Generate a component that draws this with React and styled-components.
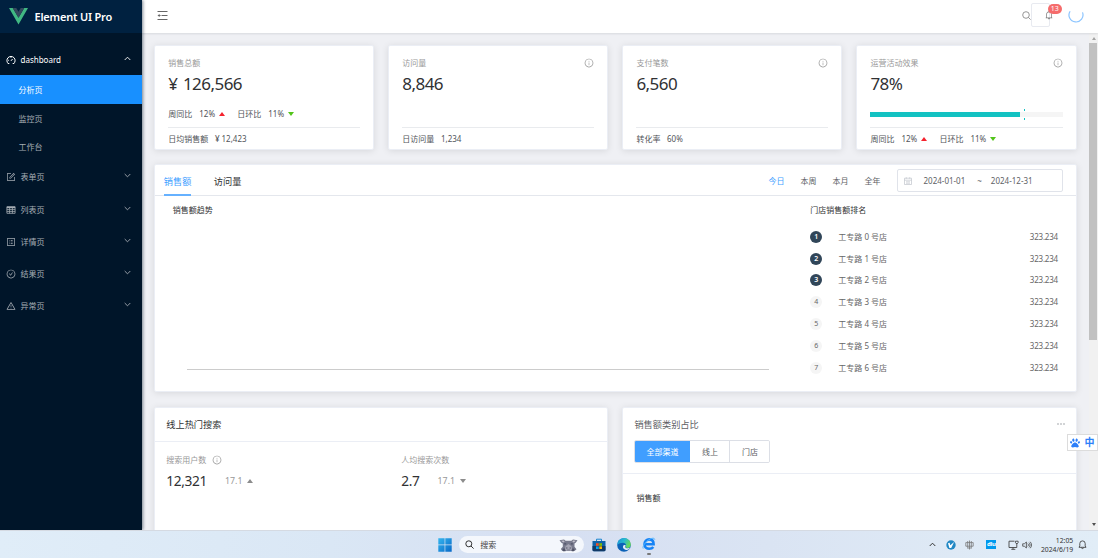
import React from 'react';
import styled, { createGlobalStyle } from 'styled-components';
import {
  AiOutlineBell,
  AiOutlineCheckCircle,
  AiOutlineForm,
  AiOutlineInfoCircle,
  AiOutlineProfile,
  AiOutlineWarning,
} from 'react-icons/ai';
import { FaPaw } from 'react-icons/fa';

const GaugeIcon = () => (
  <svg width="10" height="10" viewBox="0 0 10 10" fill="none" stroke="currentColor" strokeWidth="1">
    <path d="M2.4 8.7A4.1 4.1 0 1 1 7.6 8.7M1.9 8.5h1.4M6.7 8.5h1.4M4.9 5.9 6.6 4M5 2v.8M2.2 5.3H3" />
  </svg>
);

const TableIcon = () => (
  <svg width="10" height="10" viewBox="0 0 10 10" fill="none" stroke="currentColor" strokeWidth=".8">
    <path d="M.9 1.7h8.2v6.6H.9zM.9 4.4h8.2M.9 6.4h8.2M3.6 2v6.3M6.4 2v6.3" />
    <path d="M.9 2.4h8.2" strokeWidth="1.4" />
  </svg>
);

const FoldIcon = () => (
  <svg width="11" height="11" viewBox="0 0 11 11" fill="none" stroke="#666" strokeWidth="1">
    <path d="M.5 1.5h10M4.5 5.5h6M.5 9.5h10M1 5.5h2.6" />
    <path d="M2.6 3.9v3.2L.5 5.5z" fill="#666" stroke="none" />
  </svg>
);

const menus = [
  { title: '表单页', icon: AiOutlineForm },
  { title: '列表页', icon: TableIcon },
  { title: '详情页', icon: AiOutlineProfile },
  { title: '结果页', icon: AiOutlineCheckCircle },
  { title: '异常页', icon: AiOutlineWarning },
];

const Chevron = ({ up }) => (
  <svg width="7" height="5" viewBox="0 0 7 5" fill="none" stroke="currentColor" strokeWidth="0.9">
    <path d={up ? 'M.7 4 3.5 1.2 6.3 4' : 'M.7 1 3.5 3.8 6.3 1'} />
  </svg>
);

const VueLogo = () => (
  <svg width="19" height="16.4" viewBox="0 0 256 221">
    <path fill="#41b883" d="m0 0 128 220.8L256 0h-51.2L128 132.48 50.56 0H0z" />
    <path fill="#35495e" d="M50.56 0 128 133.12 204.8 0h-47.36L128 51.2 97.92 0H50.56z" />
  </svg>
);

const Trend = () => (
  <TrendRow>
    <span>周同比</span>
    <Percent>12%</Percent>
    <Caret $color="#f5222d" $up />
    <TrendNext>日环比</TrendNext>
    <Percent>11%</Percent>
    <Caret $color="#52c41a" />
  </TrendRow>
);

const StatCard = ({ title, value, info, children, footer }) => (
  <Stat>
    <StatHead>
      <span>{title}</span>
      {info && <AiOutlineInfoCircle size={10} />}
    </StatHead>
    <StatValue>{value}</StatValue>
    <StatBody>{children}</StatBody>
    <StatFooter>{footer}</StatFooter>
  </Stat>
);

const Sidebar = () => (
  <Aside>
    <Brand>
      <VueLogo />
      <BrandName>Element UI Pro</BrandName>
    </Brand>
    <Menu>
      <MenuItem $open>
        <GaugeIcon />
        <MenuText>dashboard</MenuText>
        <Chevron up />
      </MenuItem>
      <SubItem $active>分析页</SubItem>
      <SubItem>监控页</SubItem>
      <SubItem>工作台</SubItem>
      {menus.map(({ title, icon: Icon }) => (
        <MenuItem key={title}>
          <Icon size={10} />
          <MenuText>{title}</MenuText>
          <Chevron />
        </MenuItem>
      ))}
    </Menu>
  </Aside>
);

const Header = () => (
  <TopBar>
    <FoldIcon />
    <TopTools>
      <svg width="9" height="9" viewBox="0 0 9 9" fill="none" stroke="#8a8a8a" strokeWidth=".9">
        <circle cx="4" cy="4" r="3.3" />
        <path d="m6.3 6.3 2.3 2.3" />
      </svg>
      <BellBox>
        <AiOutlineBell size={10} />
        <Badge>13</Badge>
      </BellBox>
      <svg width="16" height="16" viewBox="0 0 16 16" fill="none">
        <path d="M2.1 4.2A7 7 0 1 0 14.5 5.4" stroke="#8cc5ff" strokeWidth="1.2" />
      </svg>
    </TopTools>
  </TopBar>
);

const SalesPanel = () => (
  <Panel>
    <TabBar>
      <Tab $active>销售额</Tab>
      <Tab>访问量</Tab>
      <Ranges>
        <Range $active>今日</Range>
        <Range>本周</Range>
        <Range>本月</Range>
        <Range>全年</Range>
        <DateRange>
          <svg width="8" height="8" viewBox="0 0 8 8" fill="none" stroke="#c0c4cc" strokeWidth="0.7">
            <path d="M.5 1.2h7v6.3h-7zM.5 3.2h7M2.3.3v1.4M5.7.3v1.4M2 4.8h4M2 6.2h4" />
          </svg>
          <DateText>2024-01-01</DateText>
          <Tilde>~</Tilde>
          <DateText>2024-12-31</DateText>
        </DateRange>
      </Ranges>
    </TabBar>
    <SalesBody>
      <Trends>
        <SmallTitle>销售额趋势</SmallTitle>
        <Axis />
      </Trends>
      <Ranking>
        <SmallTitle>门店销售额排名</SmallTitle>
        <RankList>
          {[0, 1, 2, 3, 4, 5, 6].map((i) => (
            <RankRow key={i}>
              <RankNo $top={i < 3}>{i + 1}</RankNo>
              <RankName>工专路 {i} 号店</RankName>
              <RankValue>323.234</RankValue>
            </RankRow>
          ))}
        </RankList>
      </Ranking>
    </SalesBody>
  </Panel>
);

const SearchPanel = () => (
  <BottomPanel>
    <PanelTitle>线上热门搜索</PanelTitle>
    <SearchBody>
      <SearchStat>
        <SearchLabel>
          搜索用户数 <AiOutlineInfoCircle size={10} />
        </SearchLabel>
        <SearchNumbers>
          <SearchValue>12,321</SearchValue>
          <SearchDelta>17.1</SearchDelta>
          <Caret $color="#8c8c8c" $up />
        </SearchNumbers>
      </SearchStat>
      <SearchStat>
        <SearchLabel>人均搜索次数</SearchLabel>
        <SearchNumbers>
          <SearchValue>2.7</SearchValue>
          <SearchDelta>17.1</SearchDelta>
          <Caret $color="#8c8c8c" />
        </SearchNumbers>
      </SearchStat>
    </SearchBody>
  </BottomPanel>
);

const CategoryPanel = () => (
  <BottomPanel>
    <CategoryHead>
      <CategoryTitle>
        <span>销售额类别占比</span>
        <svg width="8" height="2" viewBox="0 0 8 2" fill="#909399">
          <circle cx="1" cy="1" r=".75" />
          <circle cx="4" cy="1" r=".75" />
          <circle cx="7" cy="1" r=".75" />
        </svg>
      </CategoryTitle>
      <RadioGroup>
        <Radio $active>全部渠道</Radio>
        <Radio>线上</Radio>
        <Radio>门店</Radio>
      </RadioGroup>
    </CategoryHead>
    <CategoryBody>销售额</CategoryBody>
  </BottomPanel>
);

const WindowsLogo = () => (
  <svg width="14" height="14" viewBox="0 0 14 14">
    <defs>
      <linearGradient id="win" x1="0" y1="0" x2="1" y2="1">
        <stop offset="0" stopColor="#35b5ee" />
        <stop offset="1" stopColor="#0869c8" />
      </linearGradient>
    </defs>
    <path fill="url(#win)" d="M.3.3h6.3v6.3H.3zM7.3.3h6.4v6.3H7.3zM.3 7.3h6.3v6.4H.3zM7.3 7.3h6.4v6.4H7.3z" />
  </svg>
);

const Rhino = () => (
  <svg width="19" height="14" viewBox="0 0 19 14">
    <path fill="#77798c" d="M.5 2.2 5 1.4l1.6 1.4h5.8L14 1.4l4.5.8-1.8 2.6-1.2.8v3.2l2 2.5-2 1.6H3.4L1.8 11l2-2.3V5.6L2.4 4.8z" />
    <path fill="#c1bfcb" d="m2.2 2.8 2.5-.4 1 1.2-1.5 1zM16.8 2.8l-2.5-.4-1 1.2 1.5 1z" />
    <path fill="#4f5266" d="M5.2 5.2h2v1.3h-2zM11.8 5.2h2v1.3h-2zM3.5 11l2-.8 1 3H4zM13.5 10.2l2 .8-.7 2.2h-2z" />
    <path fill="#a4a4b3" d="M6.5 8.2 9.5 6l3 2.2.5 3-1.6 1.7H7.6L6 11.2z" />
    <path fill="#45485a" d="M7.2 9.5h1.2v1H7.2zM10.6 9.5h1.2v1h-1.2zM8 11.7h3v.6H8z" />
  </svg>
);

const StoreLogo = () => (
  <svg width="14" height="14" viewBox="0 0 14 14">
    <path fill="none" stroke="#1a86cf" strokeWidth="1" d="M4.5 4V1.2h5V4" />
    <path fill="#0f63a8" d="M.5 3h13v8.8a1.5 1.5 0 0 1-1.5 1.5H2a1.5 1.5 0 0 1-1.5-1.5z" />
    <path fill="#123a68" d="M.5 8h13v3.8a1.5 1.5 0 0 1-1.5 1.5H2a1.5 1.5 0 0 1-1.5-1.5z" />
    <path fill="#f25022" d="M4 5.2h2.7v2.6H4z" />
    <path fill="#7fba00" d="M7.3 5.2H10v2.6H7.3z" />
    <path fill="#00a4ef" d="M4 8.4h2.7V11H4z" />
    <path fill="#ffb900" d="M7.3 8.4H10V11H7.3z" />
  </svg>
);

const EdgeLogo = () => (
  <svg width="14" height="14" viewBox="0 0 14 14">
    <defs>
      <linearGradient id="edge" x1="0" y1="0" x2="1" y2=".4">
        <stop offset="0" stopColor="#1793d8" />
        <stop offset=".55" stopColor="#29b9cf" />
        <stop offset="1" stopColor="#67d95a" />
      </linearGradient>
    </defs>
    <circle cx="7" cy="7" r="6.8" fill="#0c62b7" />
    <path fill="url(#edge)" d="M.2 7A6.8 6.8 0 0 1 13.8 6.5c0 2.3-1.5 3.4-3.2 3.4-1.3 0-2.3-.5-2.3-1.1 0-.4.7-.7.7-1.7 0-1.3-1.3-2.3-3-2.3C3.2 4.8 1 6 .2 7z" />
    <path fill="#e3ebf6" d="M8.6 7.2c0 .8-.6 1-.5 1.7.2.9 1.3 1.4 2.6 1.4 1 0 1.8-.3 2.5-.8-.5 1-1.2 1.8-2.2 2.3-3 .5-5.5-1.5-5-3.4.3-1 1.3-1.6 2.6-1.2z" />
  </svg>
);

const BrowserLogo = () => (
  <svg width="14" height="14" viewBox="0 0 14 14" fill="none">
    <path stroke="#1683f5" strokeWidth="2.6" d="M3 7.3h8.6C11.6 4.3 9.8 2.4 7.2 2.4S2.5 4.5 2.5 7.2s2 4.6 4.8 4.6c1.8 0 3.1-.6 4-1.8" />
    <path stroke="#55b5ff" strokeWidth="1" d="M1.2 11.6C-.2 9.4 5.2 2.3 10 1.3c1.8-.3 2.7.2 2.8 1.3" />
  </svg>
);

const Taskbar = () => (
  <TaskbarWrap>
    <TaskCenter>
      <WindowsLogo />
      <TaskSearch>
        <svg width="9" height="9" viewBox="0 0 9 9" fill="none" stroke="#333" strokeWidth="1">
          <circle cx="3.8" cy="3.8" r="3" />
          <path d="m6 6 2.6 2.6" />
        </svg>
        <TaskSearchText>搜索</TaskSearchText>
        <Rhino />
      </TaskSearch>
      <StoreLogo />
      <EdgeLogo />
      <RunningApp>
        <BrowserLogo />
      </RunningApp>
    </TaskCenter>
    <Tray>
      <svg width="7" height="5" viewBox="0 0 7 5" fill="none" stroke="#333" strokeWidth="1">
        <path d="M.7 4 3.5 1.2 6.3 4" />
      </svg>
      <svg width="10" height="10" viewBox="0 0 10 10">
        <circle cx="5" cy="5" r="4.7" fill="#2288c4" />
        <path fill="#fff" d="m2 3.2 1.6-.4.7 2.5L8.1 2 5.2 8H3.4z" />
      </svg>
      <svg width="9" height="10" viewBox="0 0 9 10" fill="none" stroke="#777" strokeWidth=".8">
        <path d="M.8 2.6h7.4v3.6H.8zM4.5.5v9M2.7 1v6.6M6.3 1v6.6M2 8h5" />
      </svg>
      <DluIcon>dlu</DluIcon>
      <NetSound>
        <svg width="11" height="10" viewBox="0 0 11 10" fill="none" stroke="#444" strokeWidth=".9">
          <path d="M6.5 1.2H1v6.3h7.8V5M3.3 9.3h4M5 7.5v1.8M8.8 5V3.5M7.5 1.2h2.6v1.5l-.6.8H8.1l-.6-.8z" />
        </svg>
        <svg width="10" height="8" viewBox="0 0 10 8" fill="none" stroke="#444" strokeWidth=".8">
          <path d="M.7 2.8h1.6L4.4 1v6L2.3 5.2H.7zM5.8 2.6c.8.8.8 2 0 2.8M7 1.6c1.4 1.4 1.4 3.4 0 4.8M8.2.8c1.8 1.8 1.8 4.6 0 6.4" />
        </svg>
      </NetSound>
      <Clock>
        <span>12:05</span>
        <span>2024/6/19</span>
      </Clock>
      <svg width="9" height="10" viewBox="0 0 9 10" fill="none" stroke="#444" strokeWidth=".9">
        <path d="M1 7.3h7L7.2 5.8V3.6a2.7 2.7 0 0 0-5.4 0v2.2zM3.3 7.5c.2 1.4 2.2 1.4 2.4 0" />
      </svg>
    </Tray>
  </TaskbarWrap>
);

const App = () => (
  <Screen>
    <GlobalStyle />
    <Layout>
      <Sidebar />
      <Main>
        <Header />
        <Viewport>
          <Content>
            <StatGrid>
              <StatCard
                title="销售总额"
                value="¥ 126,566"
                footer={<>日均销售额 <FooterValue>¥ 12,423</FooterValue></>}
              >
                <Trend />
              </StatCard>
              <StatCard title="访问量" value="8,846" info footer={<>日访问量 <FooterValue>1,234</FooterValue></>} />
              <StatCard title="支付笔数" value="6,560" info footer={<>转化率 <FooterValue>60%</FooterValue></>} />
              <StatCard title="运营活动效果" value="78%" info footer={<Trend />}>
                <Progress>
                  <ProgressBar />
                  <ProgressTarget />
                </Progress>
              </StatCard>
            </StatGrid>
            <SalesPanel />
            <BottomGrid>
              <SearchPanel />
              <CategoryPanel />
            </BottomGrid>
          </Content>
          <Scrollbar>
            <ScrollArrow $up />
            <ScrollThumb />
            <ScrollArrow />
          </Scrollbar>
        </Viewport>
      </Main>
    </Layout>
    <Taskbar />
    <ImeBar>
      <FaPaw size={10} />
      <span>中</span>
    </ImeBar>
  </Screen>
);

const GlobalStyle = createGlobalStyle`
  * {
    box-sizing: border-box;
  }

  body {
    margin: 0;
    overflow: hidden;
    font-family: 'Noto Sans', 'Noto Sans CJK SC', sans-serif;
    font-size: 8px;
    line-height: 12px;
    color: #515459;
  }

  svg {
    display: block;
    flex-shrink: 0;
  }
`;

const Screen = styled.div`
  position: relative;
  display: flex;
  flex-direction: column;
  width: 1098px;
  height: 558px;
  overflow: hidden;
`;

const Layout = styled.div`
  display: flex;
  height: 530px;
`;

const Aside = styled.aside`
  width: 142.4px;
  flex-shrink: 0;
  background: #001529;
  box-shadow: 1px 0 3px rgba(0, 21, 41, 0.5);
  z-index: 2;
`;

const Brand = styled.div`
  display: flex;
  align-items: center;
  height: 33px;
  padding-left: 9px;
  background: #002140;
`;

const BrandName = styled.span`
  margin-left: 6.5px;
  font-size: 11px;
  font-weight: 600;
  letter-spacing: -0.2px;
  line-height: 16px;
  color: #fff;
`;

const Menu = styled.nav`
  padding-top: 10px;
`;

const MenuItem = styled.div`
  display: flex;
  align-items: center;
  height: 32.15px;
  padding: 1px 11px 0 6px;
  color: ${({ $open }) => ($open ? '#fff' : '#a6adb4')};

  > svg:last-child {
    margin-top: -3px;
  }
`;

const MenuText = styled.span`
  flex: 1;
  margin-left: 4.5px;
`;

const SubItem = styled.div`
  height: 28.6px;
  padding-left: 18.5px;
  line-height: 30px;
  color: ${({ $active }) => ($active ? '#fff' : '#a6adb4')};
  background: ${({ $active }) => ($active ? '#1890ff' : 'transparent')};
`;

const Main = styled.main`
  display: flex;
  flex: 1;
  flex-direction: column;
  min-width: 0;
`;

const TopBar = styled.header`
  display: flex;
  align-items: center;
  justify-content: space-between;
  height: 33px;
  padding: 0 14px 3px 14.6px;
  background: #fff;
  box-shadow: 0 1px 2px rgba(0, 21, 41, 0.1);
  z-index: 1;
`;

const TopTools = styled.div`
  display: flex;
  align-items: center;
  color: #7a7a7a;
`;

const BellBox = styled.div`
  position: relative;
  display: flex;
  align-items: center;
  width: 19px;
  height: 23.5px;
  margin-right: 18px;
  padding-left: 12px;
  border: 1px solid #e8eaf0;
  border-radius: 2px;
`;

const Badge = styled.span`
  position: absolute;
  top: 0;
  left: 15.5px;
  width: 14.5px;
  height: 10px;
  border-radius: 5px;
  background: #f56c6c;
  color: #fff;
  font-size: 7px;
  line-height: 10px;
  text-align: center;
`;

const Viewport = styled.div`
  display: flex;
  flex: 1;
  min-height: 0;
`;

const Content = styled.div`
  display: flex;
  flex: 1;
  flex-direction: column;
  gap: 14.5px;
  padding: 11.7px 12.5px 0 11.9px;
  overflow: hidden;
  background: #eff0f4;
`;

const Card = styled.section`
  background: #fff;
  border: 1px solid #ebeef5;
  border-radius: 2px;
  box-shadow: 0 1px 7px rgba(0, 0, 0, 0.1);
`;

const StatGrid = styled.div`
  display: grid;
  grid-template-columns: repeat(4, 1fr);
  gap: 14px;
  flex-shrink: 0;
`;

const Stat = styled(Card)`
  height: 105.3px;
  padding: 11px 13px 0;
`;

const StatHead = styled.div`
  display: flex;
  align-items: center;
  justify-content: space-between;
  height: 12px;
  color: #999;
`;

const StatValue = styled.div`
  height: 22px;
  margin-top: 4px;
  font-size: 17px;
  letter-spacing: -0.55px;
  word-spacing: 1.6px;
  line-height: 22px;
  color: #303133;
`;

const StatBody = styled.div`
  display: flex;
  align-items: center;
  height: 32px;
  padding-top: 6px;
`;

const StatFooter = styled.div`
  padding-top: 5px;
  border-top: 1px solid #e9ebee;
`;

const FooterValue = styled.span`
  margin-left: 4.5px;
`;

const TrendRow = styled.div`
  display: flex;
  align-items: center;
`;

const TrendNext = styled.span`
  margin-left: 12px;
`;

const Percent = styled.span`
  width: 16px;
  margin: 0 4px 0 7px;
`;

const Caret = styled.i`
  width: 0;
  height: 0;
  border: 3px solid transparent;
  border-${({ $up }) => ($up ? 'top' : 'bottom')}: 0;
  border-${({ $up }) => ($up ? 'bottom' : 'top')}: 4px solid ${({ $color }) => $color};
`;

const Progress = styled.div`
  position: relative;
  width: 100%;
  height: 5px;
  margin-top: 2px;
  background: #f5f5f5;
`;

const ProgressBar = styled.div`
  width: 78%;
  height: 5px;
  background: #13c2c2;
`;

const ProgressTarget = styled.div`
  position: absolute;
  top: -3px;
  left: 80%;
  width: 1px;
  height: 11px;
  border: solid #13c2c2;
  border-width: 2px 0;
`;

const Panel = styled(Card)`
  flex-shrink: 0;
  height: 228px;
`;

const TabBar = styled.div`
  display: flex;
  height: 30.5px;
  padding: 0 13px 0 8.5px;
  border-bottom: 1px solid #e4e7ed;
`;

const Tab = styled.div`
  height: 30.5px;
  margin-right: 22.5px;
  border-bottom: 2px solid ${({ $active }) => ($active ? '#66b1ff' : 'transparent')};
  font-size: 9.2px;
  line-height: 33px;
  color: ${({ $active }) => ($active ? '#409eff' : '#303133')};
`;

const Ranges = styled.div`
  display: flex;
  align-items: center;
  margin-left: auto;
  padding-top: 1px;
`;

const Range = styled.span`
  margin-right: 16px;
  color: ${({ $active }) => ($active ? '#409eff' : '#606266')};
`;

const DateRange = styled.div`
  display: flex;
  align-items: center;
  width: 166px;
  height: 23.5px;
  padding-left: 6px;
  border: 1px solid #e0e3ea;
  border-radius: 2px;
  color: #606266;
`;

const DateText = styled.span`
  margin-left: 12px;
`;

const Tilde = styled.span`
  margin-left: 12px;
  margin-right: -3px;
`;

const SalesBody = styled.div`
  display: flex;
  padding-top: 7.7px;
`;

const Trends = styled.div`
  width: 655px;
  padding-left: 17.5px;
`;

const SmallTitle = styled.div`
  height: 12px;
  color: #303133;
`;

const Axis = styled.div`
  width: 582px;
  height: 1px;
  margin: 153px 0 0 14.5px;
  background: #ccc;
`;

const Ranking = styled.div`
  flex: 1;
  padding-right: 17.5px;
`;

const RankList = styled.div`
  padding-top: 10.2px;
`;

const RankRow = styled.div`
  display: flex;
  align-items: center;
  height: 21.8px;
  color: #666;
`;

const RankNo = styled.span`
  width: 12px;
  height: 12px;
  border-radius: 50%;
  background: ${({ $top }) => ($top ? '#314659' : '#f5f5f5')};
  color: ${({ $top }) => ($top ? '#fff' : '#666')};
  font-size: 7px;
  font-weight: ${({ $top }) => ($top ? 600 : 400)};
  line-height: 12px;
  text-align: center;
`;

const RankName = styled.span`
  flex: 1;
  margin-left: 16px;
`;

const RankValue = styled.span`
  letter-spacing: -0.2px;
`;

const BottomGrid = styled.div`
  display: grid;
  grid-template-columns: 1fr 1fr;
  gap: 14px;
  flex-shrink: 0;
`;

const BottomPanel = styled(Card)`
  height: 200px;
`;

const PanelTitle = styled.div`
  height: 34.5px;
  padding-left: 11px;
  border-bottom: 1px solid #ebeef5;
  font-size: 9.2px;
  line-height: 34px;
  color: #303133;
`;

const SearchBody = styled.div`
  display: grid;
  grid-template-columns: 235px 1fr;
  padding: 12px 11px 0;
`;

const SearchStat = styled.div``;

const SearchLabel = styled.div`
  display: flex;
  align-items: center;
  gap: 5.5px;
  height: 12px;
  color: #999;
`;

const SearchNumbers = styled.div`
  display: flex;
  align-items: center;
  height: 20px;
  margin-top: 5px;
`;

const SearchValue = styled.span`
  font-size: 13.7px;
  letter-spacing: -0.35px;
  line-height: 20px;
  color: #303133;
`;

const SearchDelta = styled.span`
  margin: 0 5px 0 18px;
  font-size: 8.8px;
  color: #999;
`;

const CategoryHead = styled.div`
  height: 66px;
  padding: 10px 11px 0;
  border-bottom: 1px solid #ebeef5;
`;

const CategoryTitle = styled.div`
  display: flex;
  justify-content: space-between;
  height: 14px;
  font-size: 9.2px;
  line-height: 14px;
  color: #606266;

  svg {
    margin-top: 5px;
  }
`;

const RadioGroup = styled.div`
  display: flex;
  width: 136px;
  height: 23.5px;
  margin-top: 7.8px;
  border: 1px solid #dcdfe6;
  border-radius: 2px;
  overflow: hidden;
`;

const Radio = styled.div`
  flex: ${({ $active }) => ($active ? '0 0 56px' : '1')};
  margin: ${({ $active }) => ($active ? '-1px 0 -1px -1px' : '0')};
  border-right: ${({ $active }) => ($active ? '0' : '1px solid #dcdfe6')};
  background: ${({ $active }) => ($active ? '#409eff' : '#fff')};
  color: ${({ $active }) => ($active ? '#fff' : '#606266')};
  line-height: ${({ $active }) => ($active ? '23.5px' : '21.5px')};
  text-align: center;

  &:last-child {
    border-right: 0;
  }
`;

const CategoryBody = styled.div`
  padding: 18px 13px;
  color: #303133;
`;

const Scrollbar = styled.div`
  display: flex;
  flex-direction: column;
  align-items: center;
  width: 9px;
  background: #f1f1f1;
`;

const ScrollArrow = styled.i`
  margin: ${({ $up }) => ($up ? '4px 0 3px' : 'auto 0 4px')};
  border: 2.5px solid transparent;
  border-${({ $up }) => ($up ? 'top' : 'bottom')}: 0;
  border-${({ $up }) => ($up ? 'bottom' : 'top')}: 3px solid ${({ $up }) => ($up ? '#a3a3a3' : '#505050')};
`;

const ScrollThumb = styled.div`
  align-self: flex-start;
  width: 8px;
  height: 297px;
  background: #c1c1c1;
`;

const ImeBar = styled.div`
  position: absolute;
  top: 434px;
  right: 0;
  display: flex;
  align-items: center;
  justify-content: space-between;
  width: 31px;
  height: 17px;
  padding: 0 2.5px 0 2px;
  border: 1px solid #dcdcdc;
  background: #fff;
  color: #2d7ff9;
  font-size: 10px;
  font-weight: 700;
  line-height: 15px;
  z-index: 3;
`;

const TaskbarWrap = styled.footer`
  display: flex;
  justify-content: space-between;
  height: 28px;
  padding: 0 11.5px 0 438px;
  border-top: 1px solid #d5dae2;
  background: linear-gradient(90deg, #e0edf8 0%, #dae7f5 30%, #d6dff2 50%, #dae4f3 70%, #e1edf7 100%);
  z-index: 2;
`;

const TaskCenter = styled.div`
  display: flex;
  align-items: center;
  gap: 11.3px;
`;

const TaskSearch = styled.div`
  display: flex;
  align-items: center;
  width: 125px;
  height: 17px;
  margin: 0 -4px;
  padding: 0 6px;
  border-radius: 9px;
  background: #f4f7fc;
`;

const TaskSearchText = styled.span`
  flex: 1;
  margin-left: 6px;
  color: #444;
`;

const RunningApp = styled.div`
  display: flex;
  flex-direction: column;
  align-items: center;
  height: 20px;
  padding-top: 2.5px;

  &::after {
    content: '';
    flex-shrink: 0;
    width: 4px;
    height: 1.5px;
    margin-top: 2px;
    border-radius: 1px;
    background: #777;
  }
`;

const Tray = styled.div`
  display: flex;
  align-items: center;
  gap: 9.3px;
`;

const DluIcon = styled.span`
  width: 10px;
  height: 9px;
  margin: 0 2px 0 3px;
  background: #0099ee;
  color: #fff;
  font-size: 6px;
  font-weight: 700;
  letter-spacing: -0.3px;
  line-height: 9px;
  text-align: center;
`;

const NetSound = styled.div`
  display: flex;
  align-items: center;
  gap: 3px;
`;

const Clock = styled.div`
  display: flex;
  flex-direction: column;
  align-items: flex-end;
  margin-right: -5px;
  font-size: 6.8px;
  line-height: 9px;
  color: #333;
`;

export default App;
